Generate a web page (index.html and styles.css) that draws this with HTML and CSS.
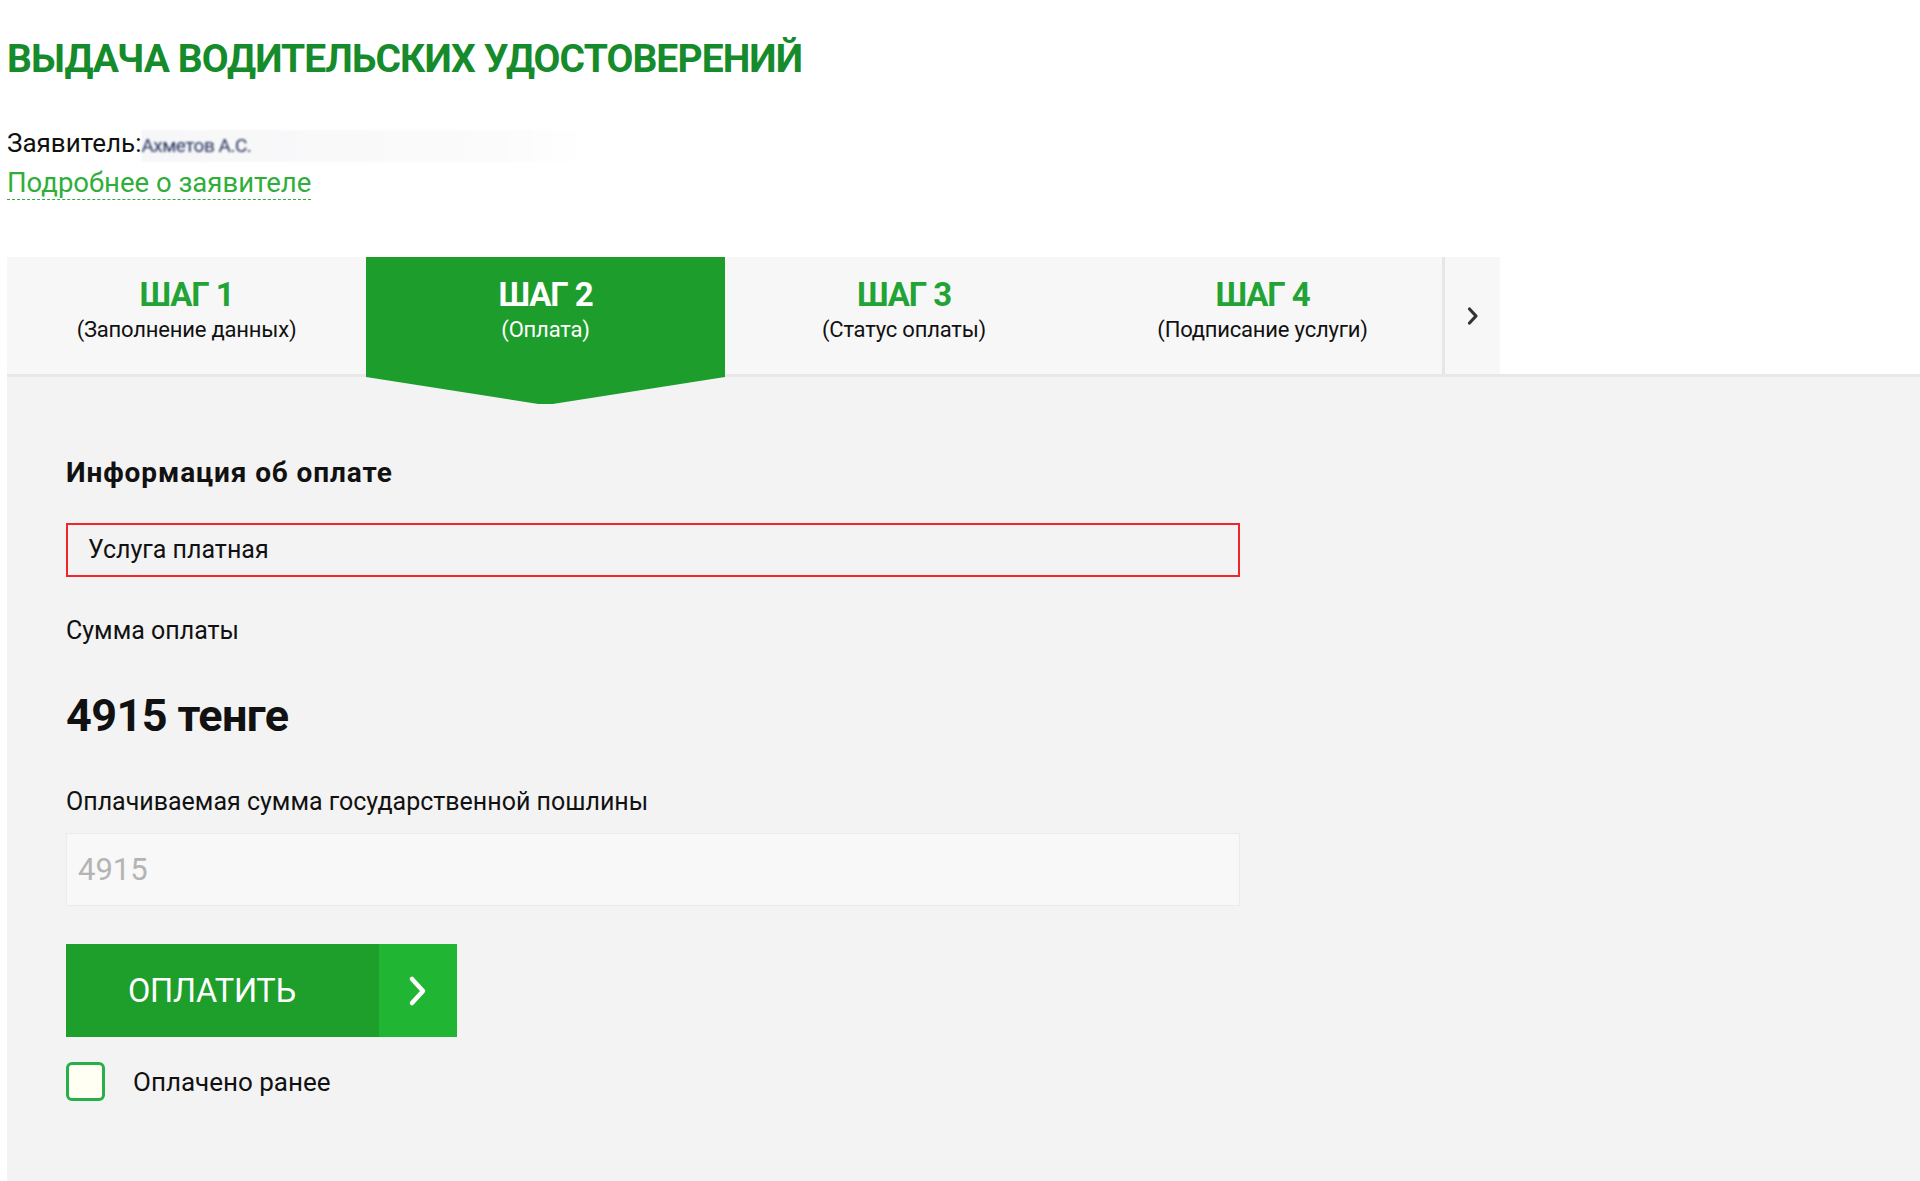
FILE: index.html
```html
<!DOCTYPE html>
<html lang="ru">
<head>
<meta charset="utf-8">
<title>Выдача водительских удостоверений</title>
<link rel="stylesheet" href="styles.css">
</head>
<body>
<div class="page">
  <header class="head">
    <h1 class="title">ВЫДАЧА ВОДИТЕЛЬСКИХ УДОСТОВЕРЕНИЙ</h1>
    <div class="applicant"><span class="applicant-label">Заявитель:</span><span class="applicant-name">Ахметов А.С.</span></div>
    <a class="more" href="#">Подробнее о заявителе</a>
  </header>

  <nav class="steps-row">
    <div class="steps">
      <div class="step">
        <div class="step-num">ШАГ 1</div>
        <div class="step-name">(Заполнение данных)</div>
      </div>
      <div class="step active">
        <div class="step-num">ШАГ 2</div>
        <div class="step-name">(Оплата)</div>
      </div>
      <div class="step">
        <div class="step-num">ШАГ 3</div>
        <div class="step-name">(Статус оплаты)</div>
      </div>
      <div class="step">
        <div class="step-num">ШАГ 4</div>
        <div class="step-name">(Подписание услуги)</div>
      </div>
      <div class="steps-next">
        <svg width="12" height="20" viewBox="0 0 12 20"><path d="M2.5 3 L9 10 L2.5 17" fill="none" stroke="#333" stroke-width="3.2" stroke-linecap="round" stroke-linejoin="round"/></svg>
      </div>
    </div>
  </nav>

  <main class="content">
    <h2 class="section-title">Информация об оплате</h2>
    <div class="notice">Услуга платная</div>
    <div class="label sum-label">Сумма оплаты</div>
    <div class="sum">4915 тенге</div>
    <div class="label">Оплачиваемая сумма государственной пошлины</div>
    <div class="field">4915</div>
    <button class="pay" type="button">
      <span class="pay-text">ОПЛАТИТЬ</span>
      <span class="pay-arrow">
        <svg width="22" height="34" viewBox="0 0 22 34"><path d="M5 5 L16 17 L5 29" fill="none" stroke="#fff" stroke-width="4.5" stroke-linecap="round" stroke-linejoin="round"/></svg>
      </span>
    </button>
    <label class="check">
      <span class="check-box"></span>
      <span class="check-text">Оплачено ранее</span>
    </label>
  </main>
</div>
</body>
</html>
```
FILE: styles.css
```css
* { box-sizing: border-box; }
html, body { margin: 0; padding: 0; background: #fff; }
body { font-family: Roboto, "Noto Sans", sans-serif; color: #111; }

.page {
  min-height: 1181px;
  display: flex;
  flex-direction: column;
  padding-left: 7px;
}

.head {
  padding-top: 34px;
  display: flex;
  flex-direction: column;
  align-items: flex-start;
}

.title {
  margin: 0;
  font-family: Roboto, "Noto Sans", sans-serif;
  font-weight: 700;
  font-size: 39px;
  line-height: 50px;
  letter-spacing: -0.9px;
  color: #168b2b;
}

.applicant {
  margin-top: 43px;
  font-size: 26px;
  line-height: 32px;
  display: flex;
  align-items: baseline;
}
.applicant-label { color: #111; }
.applicant-name {
  color: #1f2d58;
  font-size: 19px;
  letter-spacing: -0.5px;
  filter: blur(0.9px);
  padding-right: 330px;
  background: linear-gradient(to right, #f7f7f9, #fbfbfb 80%, #fff);
}

.more {
  display: inline-block;
  margin-top: 4px;
  font-size: 27.5px;
  line-height: 33px;
  color: #2fae3a;
  text-decoration: none;
  border-bottom: 1px dashed #2fae3a;
}

.steps-row {
  margin-top: 57px;
  border-bottom: 3px solid #e8e8e8;
}
.steps {
  width: 1493px;
  height: 117px;
  background: #f7f7f7;
  display: grid;
  grid-template-columns: 359px 359px 358px 359px 1fr;
}
.step {
  position: relative;
  display: flex;
  flex-direction: column;
  align-items: center;
  padding-top: 19px;
}
.step-num {
  font-weight: 700;
  font-size: 33px;
  line-height: 38px;
  letter-spacing: -1.1px;
  color: #22a336;
}
.step-name {
  margin-top: 2px;
  font-size: 22px;
  line-height: 28px;
  color: #111;
  letter-spacing: -0.2px;
}
.step.active { background: #1d9e2c; }
.step.active .step-num,
.step.active .step-name { color: #fff; }
.step.active::after {
  content: "";
  position: absolute;
  left: 0;
  right: 0;
  top: 100%;
  height: 30px;
  background: #1d9e2c;
  clip-path: polygon(0 0, 100% 0, 100% 3px, 52% 100%, 48% 100%, 0 3px);
}
.steps-next {
  border-left: 3px solid #e6e6e6;
  display: flex;
  align-items: center;
  justify-content: center;
}

.content {
  flex: 1;
  background: #f3f3f3;
  padding: 80px 0 40px 59px;
}

.section-title {
  margin: 0;
  font-size: 28px;
  line-height: 32px;
  letter-spacing: 0.9px;
  font-weight: 700;
  color: #111;
}

.notice {
  margin-top: 34px;
  width: 1174px;
  height: 54px;
  border: 2px solid #f2262a;
  padding-left: 20px;
  font-size: 25px;
  line-height: 50px;
  color: #111;
}

.label {
  font-size: 25px;
  line-height: 32px;
  color: #111;
}
.sum-label { margin-top: 38px; }

.sum {
  margin-top: 42px;
  font-weight: 700;
  font-size: 45px;
  line-height: 54px;
  letter-spacing: -0.6px;
  color: #111;
}
.sum + .label { margin-top: 43px; }

.field {
  margin-top: 15px;
  width: 1174px;
  height: 73px;
  background: #f8f8f8;
  border: 1px solid #ebebeb;
  padding-left: 11px;
  font-size: 31px;
  line-height: 71px;
  color: #b4b4b4;
}

.pay {
  margin-top: 38px;
  display: flex;
  width: 391px;
  height: 93px;
  padding: 0;
  border: 0;
  cursor: pointer;
  font-family: inherit;
}
.pay-text {
  flex: 1;
  background: #1e9f2b;
  color: #fff;
  font-size: 32.5px;
  font-weight: 400;
  letter-spacing: -0.3px;
  display: flex;
  align-items: center;
  padding-left: 62px;
}
.pay-arrow {
  width: 78px;
  background: #20b533;
  display: flex;
  align-items: center;
  justify-content: center;
}

.check {
  margin-top: 25px;
  display: flex;
  align-items: center;
  gap: 28px;
}
.check-box {
  width: 39px;
  height: 39px;
  border: 3px solid #29af4a;
  border-radius: 6px;
  background: #fffff3;
}
.check-text {
  font-size: 26px;
  line-height: 32px;
  color: #111;
}
```
